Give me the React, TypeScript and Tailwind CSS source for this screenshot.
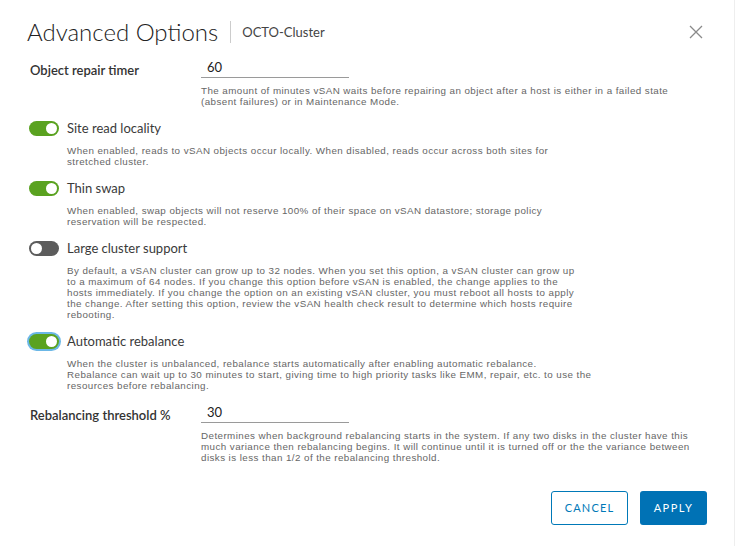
import React from 'react';

const font = { fontFamily: 'Lato, "Noto Sans", sans-serif' };
const helpFont = { fontFamily: '"Liberation Sans", Arial, sans-serif' };

const Toggle = ({ on, focused }: { on: boolean; focused?: boolean }) => (
    <span
        className={`relative inline-block w-[30px] h-[15px] rounded-full shrink-0 ${on ? 'bg-[#5aa220]' : 'bg-[#5c5c5c]'} ${focused ? 'ring-2 ring-[#6bb7e6] ring-offset-0' : ''}`}
    >
        <span className={`absolute top-[2px] w-[11px] h-[11px] rounded-full bg-white ${on ? 'right-[2px]' : 'left-[2px]'}`} />
    </span>
);

const Help = ({ lines, className = '' }: { lines: string[]; className?: string }) => (
    <div style={helpFont} className={`text-[9.8px] leading-[11px] tracking-[0.43px] text-[#666666] ${className}`}>
        {lines.map((l, i) => (
            <div key={i} className="whitespace-nowrap">{l}</div>
        ))}
    </div>
);

const ToggleRow = ({ label, on, focused, lines, top, helpTop }: { label: string; on: boolean; focused?: boolean; lines: string[]; top: string; helpTop: string }) => (
    <div className={top}>
        <div className="flex items-center h-[15px]">
            <Toggle on={on} focused={focused} />
            <span className="ml-[8px] text-[13px] text-[#3a3a3a] leading-none">{label}</span>
        </div>
        <Help lines={lines} className={`ml-[38px] ${helpTop}`} />
    </div>
);

const NumberRow = ({ label, value, lines, top }: { label: string; value: string; lines: string[]; top: string }) => (
    <div className={`flex ${top}`}>
        <div className="w-[172px] pl-px pt-[6px] text-[13px] font-semibold text-[#333] leading-none">{label}</div>
        <div>
            <div className="w-[148px] h-[20px] border-b border-[#9a9a9a] pl-[6px] text-[13px] text-[#222] leading-[18px]">{value}</div>
            <Help lines={lines} className="mt-[7px]" />
        </div>
    </div>
);

export default function App() {
    return (
        <div style={font} className="w-[735px] h-[546px] bg-white border-r border-[#eeeeee] overflow-hidden flex flex-col">
            <div className="flex items-center h-[26px] mt-[19px] pl-[27px] pr-[31px]">
                <span className="text-[24px] font-light text-[#222] leading-none">Advanced Options</span>
                <span className="w-px h-[22px] bg-[#cccccc] ml-[12px]" />
                <span className="ml-[11px] text-[13px] text-[#444] leading-none">OCTO-Cluster</span>
                <button className="ml-auto text-[#8a8a8a]">
                    <svg width="14" height="14" viewBox="0 0 14 14" fill="none" stroke="currentColor" strokeWidth="1.3">
                        <path d="M1 1L13 13M13 1L1 13" />
                    </svg>
                </button>
            </div>

            <div className="px-[29px]">
                <NumberRow
                    top="mt-[13px]"
                    label="Object repair timer"
                    value="60"
                    lines={[
                        'The amount of minutes vSAN waits before repairing an object after a host is either in a failed state',
                        '(absent failures) or in Maintenance Mode.',
                    ]}
                />
                <ToggleRow
                    top="mt-[14px]"
                    helpTop="mt-[9px]"
                    label="Site read locality"
                    on
                    lines={[
                        'When enabled, reads to vSAN objects occur locally. When disabled, reads occur across both sites for',
                        'stretched cluster.',
                    ]}
                />
                <ToggleRow
                    top="mt-[14px]"
                    helpTop="mt-[9px]"
                    label="Thin swap"
                    on
                    lines={[
                        'When enabled, swap objects will not reserve 100% of their space on vSAN datastore; storage policy',
                        'reservation will be respected.',
                    ]}
                />
                <ToggleRow
                    top="mt-[14px]"
                    helpTop="mt-[9px]"
                    label="Large cluster support"
                    on={false}
                    lines={[
                        'By default, a vSAN cluster can grow up to 32 nodes. When you set this option, a vSAN cluster can grow up',
                        'to a maximum of 64 nodes. If you change this option before vSAN is enabled, the change applies to the',
                        'hosts immediately. If you change the option on an existing vSAN cluster, you must reboot all hosts to apply',
                        'the change. After setting this option, review the vSAN health check result to determine which hosts require',
                        'rebooting.',
                    ]}
                />
                <ToggleRow
                    top="mt-[14px]"
                    helpTop="mt-[9px]"
                    label="Automatic rebalance"
                    on
                    focused
                    lines={[
                        'When the cluster is unbalanced, rebalance starts automatically after enabling automatic rebalance.',
                        'Rebalance can wait up to 30 minutes to start, giving time to high priority tasks like EMM, repair, etc. to use the',
                        'resources before rebalancing.',
                    ]}
                />
                <NumberRow
                    top="mt-[12px]"
                    label="Rebalancing threshold %"
                    value="30"
                    lines={[
                        'Determines when background rebalancing starts in the system. If any two disks in the cluster have this',
                        'much variance then rebalancing begins. It will continue until it is turned off or the the variance between',
                        'disks is less than 1/2 of the rebalancing threshold.',
                    ]}
                />
            </div>

            <div className="flex justify-end gap-[12px] mt-[28px] pr-[27px]">
                <button className="w-[77px] h-[34px] rounded-[3px] border border-[#0079b8] text-[#0079b8] text-[11px] tracking-[1.2px] bg-white">CANCEL</button>
                <button className="w-[67px] h-[34px] rounded-[3px] bg-[#0072b5] text-white text-[11px] tracking-[1.5px]">APPLY</button>
            </div>
        </div>
    );
}
